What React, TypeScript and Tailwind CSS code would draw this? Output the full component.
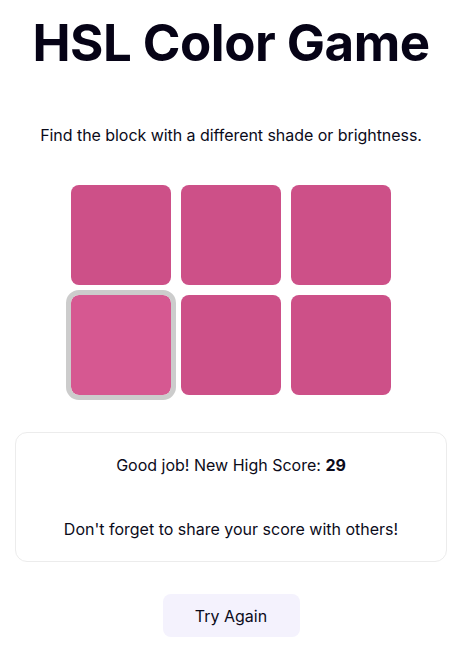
export default function App() {
  const base = 'bg-[#cd5088]';
  const odd = 'bg-[#d65891]';
  const blocks = [0, 1, 2, 3, 4, 5];
  const oddIndex = 3;

  return (
    <div className="min-h-screen bg-white text-[#0b0b1a] font-['Inter',sans-serif] flex flex-col items-center">
      <h1 className="mt-[12px] text-[51px] leading-[62px] font-bold tracking-[-0.5px] text-[#060316]">HSL Color Game</h1>
      <p className="mt-[49px] text-[16px] leading-[24px] tracking-[-0.05px]">Find the block with a different shade or brightness.</p>

      <div className="mt-[38px] grid grid-cols-[100px_100px_100px] gap-[10px]">
        {blocks.map(i => (
          <div
            key={i}
            className={
              i === oddIndex
                ? `${odd} w-[100px] h-[100px] rounded-[8px] outline-[5px] outline-solid outline-[#cccccc]`
                : `${base} w-[100px] h-[100px] rounded-[8px]`
            }
          />
        ))}
      </div>

      <div className="mt-[37px] w-[432px] border border-[#ececec] rounded-[12px] flex flex-col items-center pt-[20px] pb-[20px]">
        <p className="text-[16px] leading-[24px]">
          Good job! New High Score: <span className="font-bold">29</span>
        </p>
        <p className="mt-[40px] text-[16px] leading-[24px]">Don't forget to share your score with others!</p>
      </div>

      <button className="mt-[32px] w-[137px] h-[43px] rounded-[8px] bg-[#f4f2fd] text-[16px]">Try Again</button>
    </div>
  );
}
